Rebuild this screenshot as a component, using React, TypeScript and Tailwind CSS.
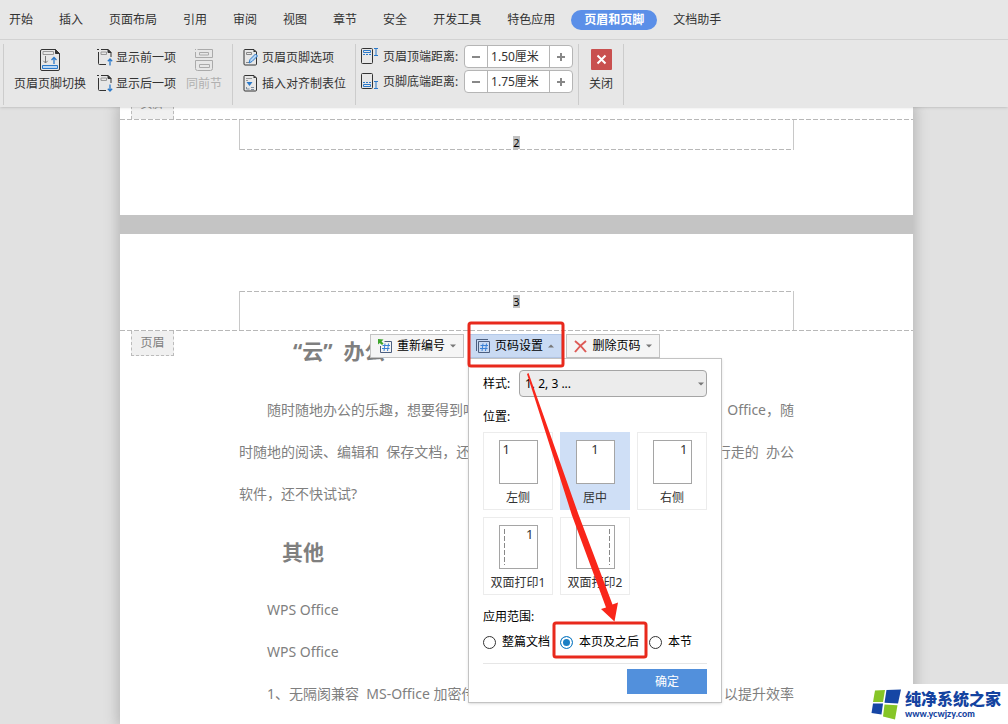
import React, { useState } from "react";

const tabs = [
  "开始",
  "插入",
  "页面布局",
  "引用",
  "审阅",
  "视图",
  "章节",
  "安全",
  "开发工具",
  "特色应用",
  "页眉和页脚",
  "文档助手",
];

const positions = [
  { label: "左侧", align: "text-left", number: true, guide: "" },
  { label: "居中", align: "text-center", number: true, guide: "" },
  { label: "右侧", align: "text-right", number: true, guide: "" },
  { label: "双面打印1", align: "text-right", number: true, guide: "left" },
  { label: "双面打印2", align: "text-left", number: false, guide: "right" },
];

const ranges = ["整篇文档", "本页及之后", "本节"];

const SwitchIcon = () => (
  <svg width="20" height="22" viewBox="0 0 20 22" fill="none">
    <path d="M2 .5h13.5l4 4V20a1.5 1.5 0 0 1-1.5 1.5H2A1.5 1.5 0 0 1 .5 20V2A1.5 1.5 0 0 1 2 .5Z" stroke="#333" />
    <path d="M15.500.5v4h4Z" fill="#333" stroke="#333" />
    <path d="M3 2.500h10.500v3H3z" stroke="#999" />
    <path d="M5.500 7v7M3.300 11.800l2.200 2.200 2.200-2.200" stroke="#777" />
    <path d="M14 15V8.500M11.500 11 14 8.500l2.500 2.500" stroke="#2b79c9" strokeWidth="1.300" />
    <path d="M2.500 16.500h15v3h-15z" stroke="#2b79c9" fill="#b9d7f5" />
  </svg>
);

const StepIcon = ({ down }: { down?: boolean }) => (
  <svg width="16" height="17" viewBox="0 0 16 17" fill="none">
    <path d="M0 .5h2M4 .5h7l3 3V8M9 15.500H2.500a1 1 0 0 1-1-1V3" stroke="#333" />
    <path d="M11 .5v3h3Z" fill="#333" stroke="#333" />
    <path d="M4 3h5.500v2.500H4z" stroke="#999" />
    {down ? (
      <path d="M13 9.500v6.500M10.800 13.800 13 16l2.200-2.200" stroke="#2b79c9" strokeWidth="1.300" />
    ) : (
      <path d="M13 16.500V10M10.800 12.200 13 10l2.200 2.200" stroke="#2b79c9" strokeWidth="1.300" />
    )}
  </svg>
);

const SameIcon = () => (
  <svg width="19" height="22" viewBox="0 0 19 22" fill="none" stroke="#aaa">
    <path d="M2.500 .5h15v8h-15M4.500 3.500h9v2.500h-9zM.5 3v5.500h3M0 .5h1" />
    <path d="M.5 11.500h17v8a2 2 0 0 1-2 2h-13a2 2 0 0 1-2-2zM4.500 15.500h10v3h-10z" />
  </svg>
);

const OptionsIcon = () => (
  <svg width="15" height="17" viewBox="0 0 15 17" fill="none">
    <path d="M2 .5h9l2.500 2.500v12a1 1 0 0 1-1 1H2a1 1 0 0 1-1-1V1.500a1 1 0 0 1 1-1Z" stroke="#333" />
    <path d="M10.500.5V3h3Z" fill="#333" />
    <path d="M3.500 3.500h5v2h-5zM3 13.500h3" stroke="#888" />
    <path d="m6 14 1-3.500 5.500-5.500 2 2L9 12.500Z" fill="#b9d7f5" stroke="#2b79c9" />
  </svg>
);

const TabIcon = () => (
  <svg width="15" height="17" viewBox="0 0 15 17" fill="none">
    <path d="M2 .5h9l2.500 2.500v12a1 1 0 0 1-1 1H2a1 1 0 0 1-1-1V1.500a1 1 0 0 1 1-1Z" stroke="#333" />
    <path d="M10.500.5V3h3Z" fill="#333" />
    <path d="M3 3.500h6M3 5.500h2" stroke="#999" />
    <path d="M3.500 7h6l-3 4Z" fill="#2b79c9" />
    <path d="M3.500 12v2h3M8 12.500h3M8 14.500h3" stroke="#7d8ea0" />
  </svg>
);

const DistanceIcon = ({ bottom }: { bottom?: boolean }) => (
  <svg width="17" height="17" viewBox="0 0 17 17" fill="none">
    <rect x=".5" y=".5" width="11" height="15" rx="1" stroke="#333" />
    {bottom ? (
      <>
        <path d="M2 9.500h8" stroke="#2b79c9" strokeDasharray="2 1" />
        <path d="M2.500 11.500h7v2h-7z" stroke="#2b79c9" />
        <path d="M13 8.500h4M13 15.500h4M15 8.500v7" stroke="#2b79c9" />
      </>
    ) : (
      <>
        <path d="M2.500 2.500h7v2h-7z" stroke="#2b79c9" />
        <path d="M2 6.500h8" stroke="#2b79c9" strokeDasharray="2 1" />
        <path d="M13 .5h4M13 7.500h4M15 .5v7" stroke="#2b79c9" />
      </>
    )}
  </svg>
);

const NumberIcon = ({ arrow }: { arrow?: boolean }) => (
  <svg width="14" height="15" viewBox="0 0 14 15" fill="none">
    {arrow ? (
      <path d="M6.500 2.500h7v11h-11V7" stroke="#4c5f80" />
    ) : (
      <path d="M2.500 2.500h11v11h-11zM.5 12V.5H12" stroke="#4c5f80" />
    )}
    <path d="M7 4.500 6 12M10.500 4.500l-1 7.500M4.500 6.500h7.500M4 9.500h7.500" stroke="#3b82d6" />
    {arrow && <path d="M0 0v5.500l1.700-1.500L4 6l1.500-1.500L3.500 2.500 5.500.5Z" fill="#3da52b" />}
  </svg>
);

const Caret = ({ up }: { up?: boolean }) => (
  <svg width="6" height="4" viewBox="0 0 6 4" fill="#777">
    <path d={up ? "M0 3.500h6L3 .5Z" : "M0 .5h6l-3 3Z"} />
  </svg>
);

const Dashes = () => (
  <div className="h-px bg-[repeating-linear-gradient(90deg,#b8b8b8_0_5px,transparent_5px_7px)]" />
);

const Separator = () => <div className="w-px self-stretch bg-[#cccccc]" />;

const Distance = ({ label, initial, bottom }: { label: string; initial: number; bottom?: boolean }) => {
  const [value, setValue] = useState(initial);
  const id = bottom ? "footer-distance" : "header-distance";

  return (
    <div className="flex items-center">
      <DistanceIcon bottom={bottom} />
      <label htmlFor={id} className="ml-[5px] w-[81px]">
        {label}
      </label>
      <div className="flex h-[23px] w-[109px] overflow-hidden rounded border border-[#b5b5b5] bg-white">
        <button
          aria-label="减少"
          className="flex w-[22px] items-center justify-center"
          onClick={() => setValue(value - 0.05)}
        >
          <span className="h-[2px] w-2 bg-[#888]" />
        </button>
        <input
          id={id}
          className="w-[63px] border-x border-[#b5b5b5] px-[3px] outline-none"
          value={`${value.toFixed(2)}厘米`}
          readOnly
        />
        <button
          aria-label="增加"
          className="flex w-[22px] items-center justify-center"
          onClick={() => setValue(value + 0.05)}
        >
          <svg width="8" height="8" viewBox="0 0 8 8" stroke="#888" strokeWidth="2">
            <path d="M0 4h8M4 0v8" />
          </svg>
        </button>
      </div>
    </div>
  );
};

const Ribbon = () => (
  <div className="flex h-[68px] items-start border-t border-[#d2d2d2] pt-1 pb-[2px] pl-[3px]">
    <Separator />
    <button className="ml-[10px] flex flex-col items-center gap-[5px] pt-[5px]">
      <SwitchIcon />
      页眉页脚切换
    </button>
    <div className="ml-[11px] flex flex-col gap-[9px] pt-[5px]">
      <button className="flex items-center gap-[3px]">
        <StepIcon />
        显示前一项
      </button>
      <button className="flex items-center gap-[3px]">
        <StepIcon down />
        显示后一项
      </button>
    </div>
    <button className="ml-[10px] flex flex-col items-center gap-[5px] pt-[5px] text-[#b0b0b0]" disabled>
      <SameIcon />
      同前节
    </button>
    <div className="w-[10px]" />
    <Separator />
    <div className="mr-[9px] ml-[10px] flex flex-col gap-[9px] pt-[5px]">
      <button className="flex items-center gap-1">
        <OptionsIcon />
        页眉页脚选项
      </button>
      <button className="flex items-center gap-1">
        <TabIcon />
        插入对齐制表位
      </button>
    </div>
    <Separator />
    <div className="mx-[5px] flex flex-col gap-[2px] pt-px">
      <Distance label="页眉顶端距离:" initial={1.5} />
      <Distance label="页脚底端距离:" initial={1.75} bottom />
    </div>
    <Separator />
    <button className="mx-[10px] flex flex-col items-center gap-[6px] pt-[5px]">
      <svg width="21" height="21" viewBox="0 0 21 21">
        <rect width="21" height="21" rx="1" fill="#c9504f" />
        <path d="m6.500 6.500 8 8m0-8-8 8" stroke="#fff" strokeWidth="2" />
      </svg>
      关闭
    </button>
    <Separator />
  </div>
);

const PageSettings = () => {
  const [position, setPosition] = useState("居中");
  const [range, setRange] = useState("本页及之后");

  return (
    <div className="relative w-[254px] border border-[#c3c3c3] bg-white px-[14px] pt-[11px] pb-2 text-black shadow-sm">
      <div className="flex items-center">
        <label htmlFor="number-style" className="w-9">
          样式:
        </label>
        <div className="relative flex-1">
          <select
            id="number-style"
            className="block h-[27px] w-full appearance-none rounded border border-[#a5a5a5] bg-[#ececec] px-[5px]"
          >
            <option>1, 2, 3 ...</option>
          </select>
          <span className="pointer-events-none absolute top-3 right-[3px]">
            <Caret />
          </span>
        </div>
      </div>
      <p className="mt-3">位置:</p>
      <div className="mt-[7px] grid grid-cols-3 gap-[7px]">
        {positions.map((item) => (
          <button
            key={item.label}
            onClick={() => setPosition(item.label)}
            className={`flex h-[78px] flex-col items-center border pt-[7px] text-[#333] ${
              position === item.label ? "border-[#cfdff6] bg-[#cfdff6]" : "border-[#ececec] bg-white"
            }`}
          >
            <span
              className={`relative block h-11 w-[39px] border border-[#a5a5a5] bg-white px-[3px] text-[13px] leading-4 ${item.align}`}
            >
              {item.number && "1"}
              {item.guide === "left" && (
                <span className="absolute top-[3px] bottom-[3px] left-1 w-px bg-[repeating-linear-gradient(#888_0_5px,transparent_5px_7px)]" />
              )}
              {item.guide === "right" && (
                <span className="absolute top-[3px] right-1 bottom-[3px] w-px bg-[repeating-linear-gradient(#888_0_5px,transparent_5px_7px)]" />
              )}
            </span>
            <span className="mt-[6px] whitespace-nowrap">{item.label}</span>
          </button>
        ))}
      </div>
      <fieldset>
        <legend className="pt-[14px]">应用范围:</legend>
        <div className="mt-2 flex h-[18px] items-center gap-[10px]">
          {ranges.map((item) => (
            <label key={item} className="flex items-center gap-[6px] whitespace-nowrap">
              <input
                type="radio"
                name="range"
                checked={range === item}
                onChange={() => setRange(item)}
                className="size-[13px] appearance-none rounded-full border border-[#333] bg-white checked:border-[#1b7fc4] checked:bg-[#1b7fc4] checked:shadow-[inset_0_0_0_2px_white]"
              />
              {item}
            </label>
          ))}
        </div>
      </fieldset>
      <div className="mt-3 border-t border-[#e6e6e6] pt-[5px] text-right">
        <button className="h-[25px] w-20 bg-[#5290dc] text-white">确定</button>
      </div>

      {/* red callouts */}
      <svg
        className="pointer-events-none absolute -top-[41px] -left-[5px]"
        width="190"
        height="344"
        viewBox="464 318 190 344"
        fill="none"
      >
        <rect x="469" y="323" width="94" height="43" rx="2" stroke="#e8291c" strokeWidth="3" />
        <rect x="554" y="623" width="92" height="34" rx="2" stroke="#e8291c" strokeWidth="3" />
        <path d="m527 374 1.500-1 50 141.500 34 90 5.500-2-3.500 19-13.500-12.500 5-1.500-34-92Z" fill="#f9261a" />
      </svg>
    </div>
  );
};

const NumberToolbar = () => (
  <div className="absolute top-[100px] left-[250px] text-black">
    <div className="flex h-6 gap-1">
      <button className="flex w-[94px] items-center justify-center gap-[5px] border border-[#c3c3c3] bg-[#f5f5f5]">
        <NumberIcon arrow />
        重新编号
        <Caret />
      </button>
      <button className="flex w-[94px] items-center justify-center gap-[5px] border border-[#b4c9e8] bg-[#c9daf3]">
        <NumberIcon />
        页码设置
        <Caret up />
      </button>
      <button className="flex w-[94px] items-center justify-center gap-[5px] border border-[#c3c3c3] bg-[#f5f5f5]">
        <svg width="13" height="13" viewBox="0 0 13 13" fill="none" stroke="#dd5a56" strokeWidth="2">
          <path d="M1 1c4 3 8 7 11 11M12 1C8 4 4 8 1 12" />
        </svg>
        删除页码
        <Caret />
      </button>
    </div>
    <div className="ml-[98px]">
      <PageSettings />
    </div>
  </div>
);

const Line = ({ left, right, indent }: { left: string; right?: string; indent?: boolean }) => (
  <p className={`flex justify-between whitespace-pre ${indent ? "pl-7" : ""}`}>
    <span>{left}</span>
    <span>{right}</span>
  </p>
);

const Watermark = () => (
  <div className="absolute right-0 bottom-0 flex h-10 items-center gap-[3px] bg-white pr-[7px] pl-1">
    <svg width="31" height="31" viewBox="0 0 31 31">
      <path d="M4 1.500 14 1l-2 12H2Z" fill="#86c527" />
      <path d="M15.500 1 30 .5 27 14.500l-13.500-.8Z" fill="#1646a5" />
      <path d="M2 14.500h10l-1.500 11L.5 24Z" fill="#1646a5" />
      <path d="m13.500 15.500 13 .8L24 30.500l-12-3Z" fill="#86c527" />
    </svg>
    <div className="text-[#1443a0]">
      <p className="text-base leading-5 font-black">纯净系统之家</p>
      <p className="font-['Lato',sans-serif] text-[9px] leading-[10px] font-black">www.ycwjzy.com</p>
    </div>
  </div>
);

const App: React.FC = () => {
  const [activeTab, setActiveTab] = useState("页眉和页脚");

  return (
    <div className="relative flex min-h-screen flex-col overflow-hidden bg-[#e1e1e1] font-['Noto_Sans','Noto_Sans_CJK_SC',sans-serif] text-xs text-[#333]">
      <header className="relative z-10 bg-[#e7e7e7] shadow">
        <nav className="flex h-[39px] items-center gap-[26px] pl-[9px] whitespace-nowrap">
          {tabs.map((tab) => (
            <button
              key={tab}
              onClick={() => setActiveTab(tab)}
              className={
                activeTab === tab
                  ? "-mx-[10px] h-5 rounded-full bg-[#5b8fe8] px-[13px] font-bold text-white"
                  : ""
              }
            >
              {tab}
            </button>
          ))}
        </nav>
        <Ribbon />
      </header>

      <main className="flex flex-1 flex-col pr-[95px] pl-[120px]">
        <div className="flex flex-1 flex-col gap-[19px] bg-[#c4c4c4] shadow-[0_0_12px_3px_#b8b8b8]">
          <section className="h-[108px] bg-white">
            <div className="flex h-3 items-end pl-[11px]">
              <span className="h-[23px] w-[43px] border-x border-dashed border-[#bbb] bg-[#f0f0f0] text-center text-[#888]">
                页脚
              </span>
            </div>
            <Dashes />
            <div className="mx-[119px] border-x border-[#c8c8c8]">
              <div className="flex h-[29px] items-end justify-center">
                <span className="bg-[#c0c0c0] text-[11px] leading-[13px] text-black">2</span>
              </div>
              <Dashes />
            </div>
          </section>

          <section className="relative flex-1 bg-white pt-[57px] text-[#7f7f7f]">
            <div className="mx-[119px] border-x border-[#c8c8c8]">
              <Dashes />
              <div className="flex h-[38px] justify-center pt-[3px]">
                <span className="h-[13px] bg-[#c0c0c0] text-[11px] leading-[13px] text-black">3</span>
              </div>
            </div>
            <Dashes />
            <div className="flex">
              <span className="ml-[11px] h-[25px] w-[43px] border border-t-0 border-dashed border-[#bbb] bg-[#f0f0f0] text-center leading-6">
                页眉
              </span>
              <h2 className="ml-[119px] text-[21px] leading-10 font-bold">“云”&nbsp;&nbsp;办公</h2>
            </div>
            <article className="mx-[119px] mt-[18px] text-sm leading-[42px]">
              <Line left="随时随地办公的乐趣，想要得到吗" right="Office，随" indent />
              <Line left="时随地的阅读、编辑和  保存文档，还" right="行走的  办公" />
              <Line left="软件，还不快试试?" />
              <h2 className="my-4 pl-[43px] text-[21px] leading-[42px] font-bold">其他</h2>
              <Line left="WPS Office" indent />
              <Line left="WPS Office" indent />
              <Line left="1、无隔阂兼容  MS-Office 加密传" right="以提升效率" indent />
            </article>
            <NumberToolbar />
          </section>
        </div>
      </main>
      <Watermark />
    </div>
  );
};

export default App;
